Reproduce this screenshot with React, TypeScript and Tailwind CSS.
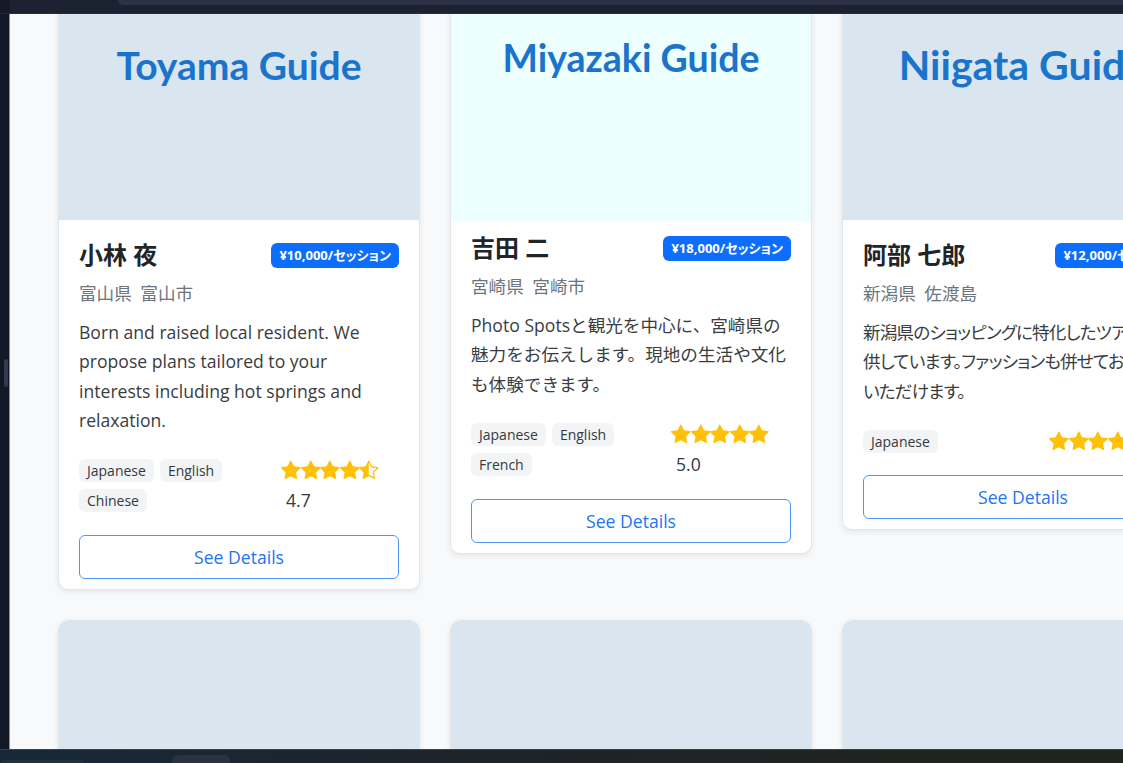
import React from "react";
import { BsStarFill, BsStarHalf } from "react-icons/bs";

type Guide = {
  title: string;
  titleSize: string;
  imgBg: string;
  name: string;
  price: string;
  location: string;
  desc: string[];
  tight: boolean;
  langs: string[];
  stars: number;
  half: boolean;
  rating: string;
  ratingW: string;
  ratingInline?: boolean;
  lifted?: boolean;
};

const guides: Guide[] = [
  {
    title: "Toyama Guide",
    titleSize: "text-[39px]",
    imgBg: "bg-[#d9e6ef]",
    name: "小林 夜",
    price: "¥10,000/セッション",
    location: "富山県 富山市",
    desc: [
      "Born and raised local resident. We",
      "propose plans tailored to your",
      "interests including hot springs and",
      "relaxation.",
    ],
    tight: false,
    langs: ["Japanese", "English", "Chinese"],
    stars: 4,
    half: true,
    rating: "4.7",
    ratingW: "w-[118px]",
  },
  {
    title: "Miyazaki Guide",
    titleSize: "text-[37.5px]",
    imgBg: "bg-[#ecfefe]",
    name: "吉田 二",
    price: "¥18,000/セッション",
    location: "宮崎県 宮崎市",
    desc: [
      "Photo Spotsと観光を中心に、宮崎県の",
      "魅力をお伝えします。現地の生活や文化",
      "も体験できます。",
    ],
    tight: false,
    langs: ["Japanese", "English", "French"],
    stars: 5,
    half: false,
    rating: "5.0",
    ratingW: "w-[120px]",
    lifted: true,
  },
  {
    title: "Niigata Guide",
    titleSize: "text-[41px]",
    imgBg: "bg-[#d9e6ef]",
    name: "阿部 七郎",
    price: "¥12,000/セッション",
    location: "新潟県 佐渡島",
    desc: [
      "新潟県のショッピングに特化したツアーを提",
      "供しています。ファッションも併せてお楽しみ",
      "いただけます。",
    ],
    tight: true,
    langs: ["Japanese"],
    stars: 4,
    half: true,
    rating: "4.5",
    ratingW: "w-[134px]",
    ratingInline: true,
  },
];

function Stars({ full, half }: { full: number; half: boolean }) {
  const items = [];
  for (let i = 0; i < full; i++) items.push(<BsStarFill key={i} size={19.6} />);
  if (half) items.push(<BsStarHalf key="h" size={19.6} />);
  return <div className="flex h-[22px] shrink-0 items-center text-[#ffc107]">{items}</div>;
}

function GuideCard({ g }: { g: Guide }) {
  return (
    <div
      className={
        "overflow-hidden rounded-[10px] border border-[#e2e5e9] bg-white shadow-[0_2px_6px_rgba(0,0,0,0.08)] " +
        (g.lifted ? "-translate-y-[7px]" : "")
      }
    >
      <div
        className={
          g.imgBg +
          " relative z-10 flex justify-center pt-[48px] " +
          (g.lifted ? "h-[233px] mb-[-8px]" : "h-[225px]")
        }
      >
        <span
          className={
            g.titleSize +
            " font-['Lato',sans-serif] font-bold leading-[44px] text-[#1a74cc] whitespace-nowrap"
          }
        >
          {g.title}
        </span>
      </div>
      <div className="px-5 pt-5 pb-[10px]">
        <div className="flex h-[30px] items-center justify-between">
          <span className="text-[24px] font-bold leading-[30px] text-[#212529]">{g.name}</span>
          <span className="rounded-[6px] bg-[#0d6efd] px-[8px] py-[3px] text-[13px] font-bold leading-[19px] text-white whitespace-nowrap [font-feature-settings:'palt']">
            {g.price}
          </span>
        </div>
        <div className="mt-[10px] text-[17.6px] leading-[26px] text-[#6c757d] [word-spacing:4px]">{g.location}</div>
        <p
          className={
            "mt-[12px] text-[17.6px] leading-[29.3px] text-[#3a3d40] whitespace-nowrap " +
            (g.tight ? "tracking-[-0.8px] [font-feature-settings:'palt']" : "")
          }
        >
          {g.desc.map((l, i) => (
            <React.Fragment key={i}>
              {l}
              {i < g.desc.length - 1 && <br />}
            </React.Fragment>
          ))}
        </p>
        <div className="mt-[24px] flex items-start justify-between">
          <div className="flex flex-1 flex-wrap gap-x-[6px] gap-y-[7px]">
            {g.langs.map((l) => (
              <span
                key={l}
                className="h-[23px] rounded-[6px] bg-[#f3f4f6] px-[8px] text-[14px] font-medium leading-[23px] text-[#343a40]"
              >
                {l}
              </span>
            ))}
          </div>
          {g.ratingInline ? (
            <div className={g.ratingW + " flex shrink-0 items-center gap-[5px] whitespace-nowrap"}>
              <Stars full={g.stars} half={g.half} />
              <span className="text-[17.6px] leading-[22px] text-[#343a40]">{g.rating}</span>
            </div>
          ) : (
            <div className={g.ratingW + " shrink-0"}>
              <Stars full={g.stars} half={g.half} />
              <div className="ml-[5px] mt-[6px] text-[17.6px] leading-[26px] text-[#343a40]">{g.rating}</div>
            </div>
          )}
        </div>
        <button className="mt-[22px] h-[44px] w-full rounded-[6px] border border-[#4d94fd] text-[17.6px] text-[#1d74f5]">
          See Details
        </button>
      </div>
    </div>
  );
}

function PlaceholderCard() {
  return (
    <div className="overflow-hidden rounded-[10px] border border-[#e2e5e9] bg-white shadow-[0_2px_6px_rgba(0,0,0,0.08)]">
      <div className="h-[225px] bg-[#d9e6ef]" />
      <div className="h-[300px]" />
    </div>
  );
}

export default function App() {
  return (
    <div className="flex h-[763px] w-[1123px] flex-col overflow-hidden bg-[#141a2a] font-['Open_Sans','Noto_Sans_CJK_JP',sans-serif]">
      <div className="flex h-[14px] shrink-0 border-b border-[#262c3d] bg-[#1d2233]">
        <div className="w-[10px] bg-[#141a2a]" />
        <div className="w-[108px]" />
        <div className="h-[5px] flex-1 rounded-bl-[6px] bg-[#2d3247]" />
      </div>
      <div className="flex min-h-0 flex-1">
        <div className="flex w-[9px] shrink-0 flex-col bg-[#131827]">
          <div className="h-[345px]" />
          <div className="ml-[4px] h-[28px] w-[4px] rounded-full bg-[#343a4c]" />
        </div>
        <div className="w-px shrink-0 bg-[#8a7fdc]" />
        <div className="min-w-0 flex-1 overflow-hidden bg-[#f8f9fa]">
          <div className="ml-[48px] mt-[-20px] grid w-max grid-cols-[362px_362px_362px] items-start gap-x-[30px] gap-y-[30px]">
            {guides.map((g) => (
              <GuideCard key={g.title} g={g} />
            ))}
            <PlaceholderCard />
            <PlaceholderCard />
            <PlaceholderCard />
          </div>
        </div>
      </div>
      <div className="relative h-[14px] shrink-0 border-t border-[#3a434d] bg-gradient-to-r from-[#172838] via-[#1f2327] to-[#1f241c]">
        <div className="absolute left-[172px] top-[5px] h-[10px] w-[58px] rounded-t-[6px] bg-[#27343f]" />
        <div className="absolute left-0 top-[10px] h-[6px] w-[85px] rounded-t-[8px] bg-[#24313b]" />
      </div>
    </div>
  );
}
